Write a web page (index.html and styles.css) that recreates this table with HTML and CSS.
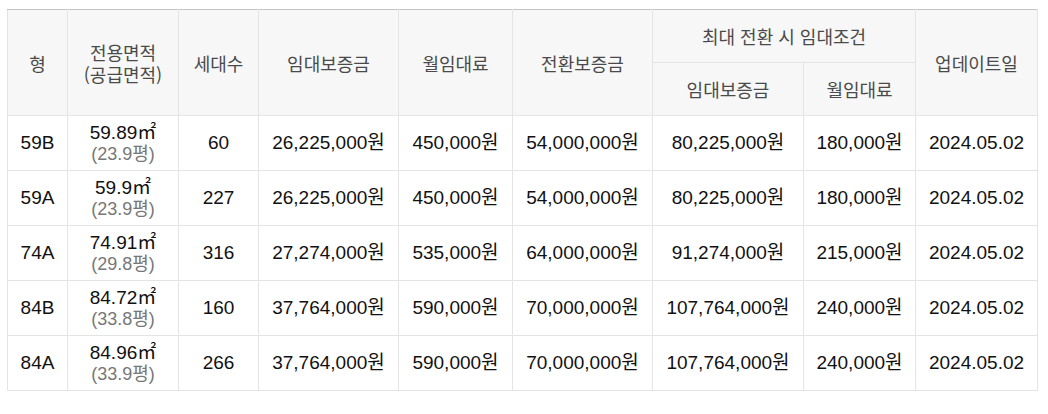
FILE: index.html
```html
<!DOCTYPE html>
<html lang="ko">
<head>
<meta charset="utf-8">
<title>임대조건</title>
<link rel="stylesheet" href="styles.css">
</head>
<body>
<div class="wrap">
<table class="rent">
  <colgroup>
    <col class="c1"><col class="c2"><col class="c3"><col class="c4"><col class="c5">
    <col class="c6"><col class="c7"><col class="c8"><col class="c9">
  </colgroup>
  <thead>
    <tr class="h1">
      <th rowspan="2">형</th>
      <th rowspan="2">전용면적<br>(공급면적)</th>
      <th rowspan="2">세대수</th>
      <th rowspan="2">임대보증금</th>
      <th rowspan="2">월임대료</th>
      <th rowspan="2">전환보증금</th>
      <th colspan="2">최대 전환 시 임대조건</th>
      <th rowspan="2">업데이트일</th>
    </tr>
    <tr class="h2">
      <th>임대보증금</th>
      <th>월임대료</th>
    </tr>
  </thead>
  <tbody>
    <tr>
      <td>59B</td>
      <td><span class="area">59.89㎡</span><span class="py">(23.9평)</span></td>
      <td>60</td>
      <td>26,225,000원</td>
      <td>450,000원</td>
      <td>54,000,000원</td>
      <td>80,225,000원</td>
      <td>180,000원</td>
      <td>2024.05.02</td>
    </tr>
    <tr>
      <td>59A</td>
      <td><span class="area">59.9㎡</span><span class="py">(23.9평)</span></td>
      <td>227</td>
      <td>26,225,000원</td>
      <td>450,000원</td>
      <td>54,000,000원</td>
      <td>80,225,000원</td>
      <td>180,000원</td>
      <td>2024.05.02</td>
    </tr>
    <tr>
      <td>74A</td>
      <td><span class="area">74.91㎡</span><span class="py">(29.8평)</span></td>
      <td>316</td>
      <td>27,274,000원</td>
      <td>535,000원</td>
      <td>64,000,000원</td>
      <td>91,274,000원</td>
      <td>215,000원</td>
      <td>2024.05.02</td>
    </tr>
    <tr>
      <td>84B</td>
      <td><span class="area">84.72㎡</span><span class="py">(33.8평)</span></td>
      <td>160</td>
      <td>37,764,000원</td>
      <td>590,000원</td>
      <td>70,000,000원</td>
      <td>107,764,000원</td>
      <td>240,000원</td>
      <td>2024.05.02</td>
    </tr>
    <tr>
      <td>84A</td>
      <td><span class="area">84.96㎡</span><span class="py">(33.9평)</span></td>
      <td>266</td>
      <td>37,764,000원</td>
      <td>590,000원</td>
      <td>70,000,000원</td>
      <td>107,764,000원</td>
      <td>240,000원</td>
      <td>2024.05.02</td>
    </tr>
  </tbody>
</table>
</div>
</body>
</html>
```

FILE: styles.css
```css
html, body {
  margin: 0;
  padding: 0;
  background: #ffffff;
}

body {
  font-family: "Liberation Sans", "Noto Sans CJK KR", Arial, sans-serif;
  color: #111111;
}

.wrap {
  padding: 9px 0 0 7px;
}

.rent {
  width: 1030px;
  table-layout: fixed;
  border-collapse: collapse;
  border-top: 1px solid #c4c4c4;
}

.c1 { width: 60px; }
.c2 { width: 111px; }
.c3 { width: 80px; }
.c4 { width: 140px; }
.c5 { width: 114px; }
.c6 { width: 140px; }
.c7 { width: 151px; }
.c8 { width: 112px; }
.c9 { width: 122px; }

.rent th,
.rent td {
  border: 1px solid #e4e4e4;
  text-align: center;
  vertical-align: middle;
  padding: 0;
}

.rent th {
  background: #f7f7f7;
  font-family: "Noto Sans CJK KR", "Liberation Sans", sans-serif;
  font-weight: 400;
  font-size: 18px;
  line-height: 22px;
  color: #4a4a4a;
}

.rent thead tr {
  height: 53px;
}

.rent .h1 th {
  border-top: 1px solid #c4c4c4;
}

.rent td {
  height: 54px;
  font-size: 19px;
  line-height: 22px;
  color: #111111;
}

.area {
  display: block;
  font-size: 19px;
  line-height: 21px;
}

.py {
  display: block;
  font-size: 18px;
  line-height: 22px;
  color: #777777;
}
```
